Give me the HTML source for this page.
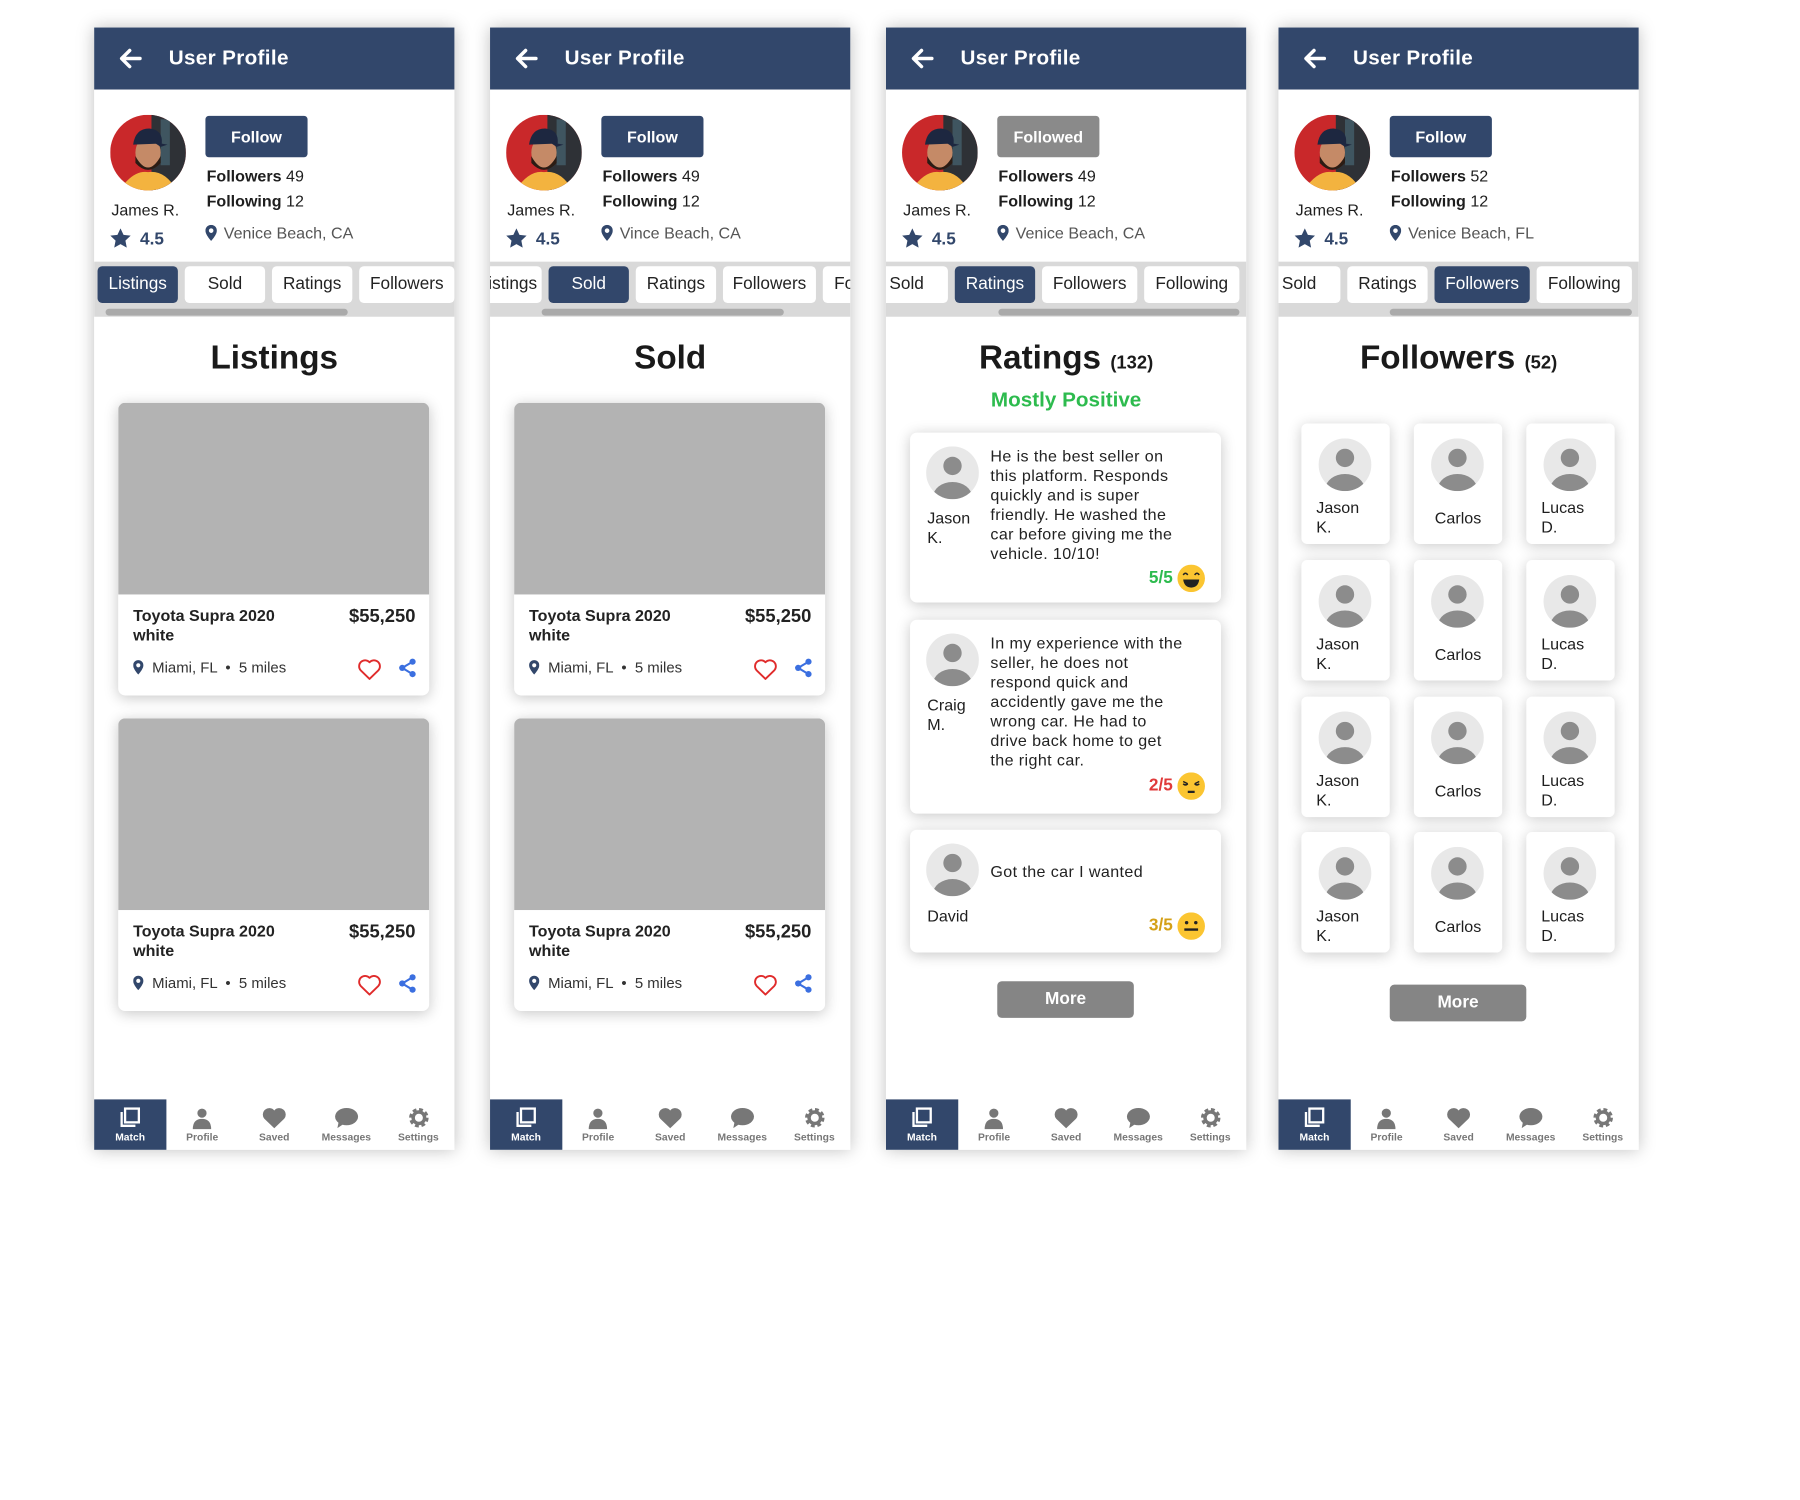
<!DOCTYPE html>
<html><head><meta charset="utf-8">
<style>
*{box-sizing:border-box;margin:0;padding:0}
html,body{width:1800px;height:1500px;background:#fff;overflow:hidden;font-family:"Liberation Sans",Arial,sans-serif;color:#1e1e1e}
#wrap{position:absolute;left:0;top:0;width:1560px;height:1300px;transform:scale(1.1476);transform-origin:0 0}
.panel{position:absolute;top:24px;width:314px;height:978px;background:#fff;box-shadow:0 0 14px rgba(0,0,0,.25);overflow:hidden}
.hdr{position:absolute;left:0;top:0;width:314px;height:54px;background:#32476b;color:#fff}
.hdr .t{position:absolute;left:65px;top:16px;font-size:18px;font-weight:bold;letter-spacing:.3px}
.hdr svg{position:absolute;left:22px;top:18px}
.av{position:absolute;left:14px;top:76px;width:66px;height:66px;border-radius:50%;overflow:hidden}
.name{position:absolute;left:15px;top:151px;font-size:14px}
.rate{position:absolute;left:14px;top:175px;font-size:15px;font-weight:bold;color:#32476b}
.rate svg{vertical-align:-3px;margin-right:8px}
.fbtn{position:absolute;left:97px;top:77px;width:89px;height:36px;border-radius:3px;background:#32476b;color:#fff;font-weight:bold;font-size:14px;text-align:center;line-height:36px}
.fl{position:absolute;left:98px;font-size:14px}
.fl b{font-weight:bold}
.loc{position:absolute;left:97px;top:171px;font-size:14px;color:#555}
.loc svg{vertical-align:-2px;margin-right:6px}
.tabbar{position:absolute;left:0;top:204px;width:314px;height:48px;background:#d9d9d9;overflow:hidden}
.tabs{position:absolute;top:4px;display:flex;gap:6px}
.tab{height:32px;background:#fff;border-radius:4px;font-size:15px;line-height:32px;text-align:center;color:#222;flex:none}
.tab.on{background:#32476b;color:#fff}
.sb{position:absolute;top:41px;height:6px;background:#aaa;border-radius:3px}
.title{position:absolute;left:0;width:314px;top:272px;text-align:center;font-size:29px;font-weight:bold;color:#1a1a1a}
.title small{font-size:16px}
.card{position:absolute;left:21px;width:271px;background:#fff;border-radius:6px;box-shadow:0 2px 12px rgba(0,0,0,.22);overflow:hidden}
.lc{height:255px}
.lc .img{height:167px;background:#b3b3b3}
.lc .nm{position:absolute;left:13px;top:177px;font-size:14px;font-weight:bold;line-height:17px;width:150px;color:#222}
.lc .pr{position:absolute;right:12px;top:178px;font-size:16px;font-weight:bold;color:#222}
.lc .lo{position:absolute;left:13px;top:223px;font-size:13px;color:#333}
.lc .lo svg{vertical-align:-2px;margin-right:4px}
.lc .ic{position:absolute;top:222px}
.rv .ua{position:absolute;left:14px;top:12px}
.rv .un{position:absolute;left:15px;font-size:14px;line-height:17px}
.rv .tx{position:absolute;left:70px;top:12px;font-size:14px;line-height:17px;color:#222;letter-spacing:.35px;white-space:nowrap}
.rv .sc{position:absolute;right:42px;font-size:15px;font-weight:bold}
.rv .em{position:absolute;right:14px}
.more{position:absolute;left:97px;width:119px;height:32px;border-radius:4px;background:#858585;color:#fff;font-weight:bold;font-size:15px;text-align:center;line-height:32px}
.gc{position:absolute;width:77px;height:105px;background:#fff;border-radius:5px;box-shadow:0 2px 12px rgba(0,0,0,.2)}
.gc svg{position:absolute;left:15px;top:13px}
.gc .n{position:absolute;left:13px;top:65px;font-size:14px;line-height:17px}
.gc .n.c{left:0;width:77px;text-align:center;top:74px}
.nav{position:absolute;left:0;top:934px;width:314px;height:44px;display:flex}
.nav div{flex:1;text-align:center;font-size:9px;font-weight:bold;color:#777;position:relative}
.nav div svg{display:block;margin:6px auto 2px}
.nav div.on{background:#32476b;color:#fff}
</style></head><body><div id="wrap">

<svg width="0" height="0" style="position:absolute">
<defs>
<symbol id="user" viewBox="0 0 46 46"><circle cx="23" cy="23" r="23" fill="#e8e8e8"/><clipPath id="cc"><circle cx="23" cy="23" r="23"/></clipPath><circle cx="23" cy="17" r="8" fill="#8c8c8c"/><ellipse cx="23" cy="44" rx="17" ry="13" fill="#8c8c8c" clip-path="url(#cc)"/></symbol>
<symbol id="photo" viewBox="0 0 66 66"><rect width="66" height="66" fill="#c9282a"/><rect x="36" width="30" height="66" fill="#2e3136"/><rect x="44" y="4" width="8" height="40" fill="#3f5560"/><path d="M8 66 Q20 48 33 50 Q48 48 58 66Z" fill="#f3b33f"/><ellipse cx="33" cy="33" rx="11" ry="14" fill="#c58a67"/><path d="M22 36 Q33 56 44 36 L44 42 Q33 54 22 42Z" fill="#2b1c14"/><path d="M20 26 Q22 12 34 12 Q46 13 45 25 L20 26Z" fill="#1d2740"/><path d="M38 24 L50 26 L44 28Z" fill="#1d2740"/></symbol>
<symbol id="pin" viewBox="0 0 10 14"><path d="M5 0C2.2 0 0 2.2 0 5c0 3.6 5 9 5 9s5-5.4 5-9C10 2.2 7.8 0 5 0zm0 7a2 2 0 110-4 2 2 0 010 4z" fill="#32476b"/></symbol>
<symbol id="heart" viewBox="0 0 24 22"><path d="M12 20.5 L3.5 12.2 A5.3 5.3 0 0 1 12 4.5 A5.3 5.3 0 0 1 20.5 12.2Z" fill="none" stroke="#e02b2b" stroke-width="1.8" stroke-linejoin="round"/></symbol>
<symbol id="share" viewBox="0 0 20 20"><path d="M15 4 L5 10 L15 16" stroke="#3b6fe0" stroke-width="2" fill="none"/><circle cx="15" cy="4" r="3" fill="#3b6fe0"/><circle cx="5" cy="10" r="3" fill="#3b6fe0"/><circle cx="15" cy="16" r="3" fill="#3b6fe0"/></symbol>
</defs></svg>

<!-- Panel 1 -->
<div class="panel" style="left:82px">
 <div class="hdr"><svg width="20" height="18" viewBox="0 0 20 18"><path d="M18 9H3M9 2L2 9l7 7" stroke="#fff" stroke-width="3" fill="none" stroke-linecap="round" stroke-linejoin="round"/></svg><div class="t">User Profile</div></div>
 <div class="av"><svg width="66" height="66"><use href="#photo"/></svg></div>
 <div class="name">James R.</div>
 <div class="rate"><svg width="18" height="17" viewBox="0 0 24 23"><path d="M12 0l3.6 7.6 8.4 1-6.2 5.8 1.6 8.3L12 18.6 4.6 22.7l1.6-8.3L0 8.6l8.4-1z" fill="#32476b"/></svg>4.5</div>
 <div class="fbtn">Follow</div>
 <div class="fl" style="top:121px"><b>Followers</b> 49</div>
 <div class="fl" style="top:143px"><b>Following</b> 12</div>
 <div class="loc"><svg width="10" height="14"><use href="#pin"/></svg>Venice Beach, CA</div>
 <div class="tabbar"><div class="tabs" style="left:3px"><div class="tab on" style="width:70px">Listings</div><div class="tab" style="width:70px">Sold</div><div class="tab" style="width:70px">Ratings</div><div class="tab" style="width:83px">Followers</div><div class="tab" style="width:83px">Following</div></div><div class="sb" style="left:10px;width:211px"></div></div>
 <div class="title">Listings</div>
 <div class="card lc" style="top:327px"><div class="img"></div><div class="nm">Toyota Supra 2020 white</div><div class="pr">$55,250</div><div class="lo"><svg width="9" height="13"><use href="#pin"/></svg> Miami, FL &nbsp;•&nbsp; 5 miles</div><svg class="ic" style="left:208px" width="22" height="20"><use href="#heart"/></svg><svg class="ic" style="left:243px" width="18" height="18"><use href="#share"/></svg></div>
 <div class="card lc" style="top:602px"><div class="img"></div><div class="nm">Toyota Supra 2020 white</div><div class="pr">$55,250</div><div class="lo"><svg width="9" height="13"><use href="#pin"/></svg> Miami, FL &nbsp;•&nbsp; 5 miles</div><svg class="ic" style="left:208px" width="22" height="20"><use href="#heart"/></svg><svg class="ic" style="left:243px" width="18" height="18"><use href="#share"/></svg></div>
 <div class="nav">
  <div class="on"><svg width="20" height="20" viewBox="0 0 20 20"><rect x="6" y="2" width="12" height="12" fill="none" stroke="currentColor" stroke-width="2"/><path d="M3 5v12h12" fill="none" stroke="currentColor" stroke-width="2"/></svg>Match</div>
  <div><svg width="20" height="20" viewBox="0 0 20 20"><circle cx="10" cy="6" r="4" fill="#777"/><path d="M2 20Q2 11 10 11Q18 11 18 20Z" fill="#777"/></svg>Profile</div>
  <div><svg width="22" height="20" viewBox="0 0 24 22"><path d="M12 21L2.5 12A5.8 5.8 0 0 1 12 4A5.8 5.8 0 0 1 21.5 12Z" fill="#777"/></svg>Saved</div>
  <div><svg width="22" height="20" viewBox="0 0 22 20"><ellipse cx="11" cy="9" rx="10" ry="7.5" fill="#777"/><path d="M4 14L3 19L9 15Z" fill="#777"/></svg>Messages</div>
  <div><svg width="20" height="20" viewBox="0 0 20 20"><circle cx="10" cy="10" r="6.5" fill="none" stroke="#777" stroke-width="4" stroke-dasharray="3 2.1"/><circle cx="10" cy="10" r="5" fill="none" stroke="#777" stroke-width="3"/></svg>Settings</div>
 </div>
</div>

<!-- Panel 2 -->
<div class="panel" style="left:427px">
 <div class="hdr"><svg width="20" height="18" viewBox="0 0 20 18"><path d="M18 9H3M9 2L2 9l7 7" stroke="#fff" stroke-width="3" fill="none" stroke-linecap="round" stroke-linejoin="round"/></svg><div class="t">User Profile</div></div>
 <div class="av"><svg width="66" height="66"><use href="#photo"/></svg></div>
 <div class="name">James R.</div>
 <div class="rate"><svg width="18" height="17" viewBox="0 0 24 23"><path d="M12 0l3.6 7.6 8.4 1-6.2 5.8 1.6 8.3L12 18.6 4.6 22.7l1.6-8.3L0 8.6l8.4-1z" fill="#32476b"/></svg>4.5</div>
 <div class="fbtn">Follow</div>
 <div class="fl" style="top:121px"><b>Followers</b> 49</div>
 <div class="fl" style="top:143px"><b>Following</b> 12</div>
 <div class="loc"><svg width="10" height="14"><use href="#pin"/></svg>Vince Beach, CA</div>
 <div class="tabbar"><div class="tabs" style="left:-25px"><div class="tab" style="width:70px;text-align:right;padding-right:4px">Listings</div><div class="tab on" style="width:70px">Sold</div><div class="tab" style="width:70px">Ratings</div><div class="tab" style="width:81px">Followers</div><div class="tab" style="width:83px">Following</div></div><div class="sb" style="left:45px;width:211px"></div></div>
 <div class="title">Sold</div>
 <div class="card lc" style="top:327px"><div class="img"></div><div class="nm">Toyota Supra 2020 white</div><div class="pr">$55,250</div><div class="lo"><svg width="9" height="13"><use href="#pin"/></svg> Miami, FL &nbsp;•&nbsp; 5 miles</div><svg class="ic" style="left:208px" width="22" height="20"><use href="#heart"/></svg><svg class="ic" style="left:243px" width="18" height="18"><use href="#share"/></svg></div>
 <div class="card lc" style="top:602px"><div class="img"></div><div class="nm">Toyota Supra 2020 white</div><div class="pr">$55,250</div><div class="lo"><svg width="9" height="13"><use href="#pin"/></svg> Miami, FL &nbsp;•&nbsp; 5 miles</div><svg class="ic" style="left:208px" width="22" height="20"><use href="#heart"/></svg><svg class="ic" style="left:243px" width="18" height="18"><use href="#share"/></svg></div>
 <div class="nav">
  <div class="on"><svg width="20" height="20" viewBox="0 0 20 20"><rect x="6" y="2" width="12" height="12" fill="none" stroke="currentColor" stroke-width="2"/><path d="M3 5v12h12" fill="none" stroke="currentColor" stroke-width="2"/></svg>Match</div>
  <div><svg width="20" height="20" viewBox="0 0 20 20"><circle cx="10" cy="6" r="4" fill="#777"/><path d="M2 20Q2 11 10 11Q18 11 18 20Z" fill="#777"/></svg>Profile</div>
  <div><svg width="22" height="20" viewBox="0 0 24 22"><path d="M12 21L2.5 12A5.8 5.8 0 0 1 12 4A5.8 5.8 0 0 1 21.5 12Z" fill="#777"/></svg>Saved</div>
  <div><svg width="22" height="20" viewBox="0 0 22 20"><ellipse cx="11" cy="9" rx="10" ry="7.5" fill="#777"/><path d="M4 14L3 19L9 15Z" fill="#777"/></svg>Messages</div>
  <div><svg width="20" height="20" viewBox="0 0 20 20"><circle cx="10" cy="10" r="6.5" fill="none" stroke="#777" stroke-width="4" stroke-dasharray="3 2.1"/><circle cx="10" cy="10" r="5" fill="none" stroke="#777" stroke-width="3"/></svg>Settings</div>
 </div>
</div>

<!-- Panel 3 -->
<div class="panel" style="left:772px">
 <div class="hdr"><svg width="20" height="18" viewBox="0 0 20 18"><path d="M18 9H3M9 2L2 9l7 7" stroke="#fff" stroke-width="3" fill="none" stroke-linecap="round" stroke-linejoin="round"/></svg><div class="t">User Profile</div></div>
 <div class="av"><svg width="66" height="66"><use href="#photo"/></svg></div>
 <div class="name">James R.</div>
 <div class="rate"><svg width="18" height="17" viewBox="0 0 24 23"><path d="M12 0l3.6 7.6 8.4 1-6.2 5.8 1.6 8.3L12 18.6 4.6 22.7l1.6-8.3L0 8.6l8.4-1z" fill="#32476b"/></svg>4.5</div>
 <div class="fbtn" style="background:#8a8a8a">Followed</div>
 <div class="fl" style="top:121px"><b>Followers</b> 49</div>
 <div class="fl" style="top:143px"><b>Following</b> 12</div>
 <div class="loc"><svg width="10" height="14"><use href="#pin"/></svg>Venice Beach, CA</div>
 <div class="tabbar"><div class="tabs" style="left:-16px"><div class="tab" style="width:70px;text-align:left;padding-left:19px">Sold</div><div class="tab on" style="width:70px">Ratings</div><div class="tab" style="width:83px">Followers</div><div class="tab" style="width:83px">Following</div></div><div class="sb" style="left:98px;width:210px"></div></div>
 <div class="title">Ratings <small>(132)</small></div>
 <div style="position:absolute;left:0;width:314px;top:314px;text-align:center;font-size:18px;font-weight:bold;color:#2dbb4e">Mostly Positive</div>
 <div class="card rv" style="top:353px;height:148px">
  <svg class="ua" width="46" height="46"><use href="#user"/></svg>
  <div class="un" style="top:66px">Jason<br>K.</div>
  <div class="tx">He is the best seller on<br>this platform. Responds<br>quickly and is super<br>friendly. He washed the<br>car before giving me the<br>vehicle. 10/10!</div>
  <div class="sc" style="top:118px;color:#2dbb4e">5/5</div>
  <svg class="em" style="top:115px" width="24" height="24" viewBox="0 0 24 24"><circle cx="12" cy="12" r="12" fill="#fbc531"/><path d="M5 9q2-3 4 0M15 9q2-3 4 0" stroke="#222" stroke-width="1.3" fill="none"/><path d="M5 13h14q-1 7-7 7t-7-7z" fill="#222"/></svg>
 </div>
 <div class="card rv" style="top:516px;height:169px">
  <svg class="ua" width="46" height="46"><use href="#user"/></svg>
  <div class="un" style="top:66px">Craig<br>M.</div>
  <div class="tx">In my experience with the<br>seller, he does not<br>respond quick and<br>accidently gave me the<br>wrong car. He had to<br>drive back home to get<br>the right car.</div>
  <div class="sc" style="top:136px;color:#e03a3a">2/5</div>
  <svg class="em" style="top:133px" width="24" height="24" viewBox="0 0 24 24"><circle cx="12" cy="12" r="12" fill="#fbc531"/><path d="M5 8l4 2M19 8l-4 2M5 10q2 2 4 0M15 10q2 2 4 0" stroke="#222" stroke-width="1.3" fill="none"/><path d="M9 17h6" stroke="#222" stroke-width="2"/></svg>
 </div>
 <div class="card rv" style="top:699px;height:107px">
  <svg class="ua" width="46" height="46"><use href="#user"/></svg>
  <div class="un" style="top:67px">David</div>
  <div class="tx" style="top:28px">Got the car I wanted</div>
  <div class="sc" style="top:75px;color:#d4a017">3/5</div>
  <svg class="em" style="top:72px" width="24" height="24" viewBox="0 0 24 24"><circle cx="12" cy="12" r="12" fill="#fbc531"/><circle cx="8" cy="9" r="1.5" fill="#222"/><circle cx="16" cy="9" r="1.5" fill="#222"/><path d="M6 15h12" stroke="#222" stroke-width="2"/></svg>
 </div>
 <div class="more" style="top:831px">More</div>
 <div class="nav">
  <div class="on"><svg width="20" height="20" viewBox="0 0 20 20"><rect x="6" y="2" width="12" height="12" fill="none" stroke="currentColor" stroke-width="2"/><path d="M3 5v12h12" fill="none" stroke="currentColor" stroke-width="2"/></svg>Match</div>
  <div><svg width="20" height="20" viewBox="0 0 20 20"><circle cx="10" cy="6" r="4" fill="#777"/><path d="M2 20Q2 11 10 11Q18 11 18 20Z" fill="#777"/></svg>Profile</div>
  <div><svg width="22" height="20" viewBox="0 0 24 22"><path d="M12 21L2.5 12A5.8 5.8 0 0 1 12 4A5.8 5.8 0 0 1 21.5 12Z" fill="#777"/></svg>Saved</div>
  <div><svg width="22" height="20" viewBox="0 0 22 20"><ellipse cx="11" cy="9" rx="10" ry="7.5" fill="#777"/><path d="M4 14L3 19L9 15Z" fill="#777"/></svg>Messages</div>
  <div><svg width="20" height="20" viewBox="0 0 20 20"><circle cx="10" cy="10" r="6.5" fill="none" stroke="#777" stroke-width="4" stroke-dasharray="3 2.1"/><circle cx="10" cy="10" r="5" fill="none" stroke="#777" stroke-width="3"/></svg>Settings</div>
 </div>
</div>

<!-- Panel 4 -->
<div class="panel" style="left:1114px">
 <div class="hdr"><svg width="20" height="18" viewBox="0 0 20 18"><path d="M18 9H3M9 2L2 9l7 7" stroke="#fff" stroke-width="3" fill="none" stroke-linecap="round" stroke-linejoin="round"/></svg><div class="t">User Profile</div></div>
 <div class="av"><svg width="66" height="66"><use href="#photo"/></svg></div>
 <div class="name">James R.</div>
 <div class="rate"><svg width="18" height="17" viewBox="0 0 24 23"><path d="M12 0l3.6 7.6 8.4 1-6.2 5.8 1.6 8.3L12 18.6 4.6 22.7l1.6-8.3L0 8.6l8.4-1z" fill="#32476b"/></svg>4.5</div>
 <div class="fbtn">Follow</div>
 <div class="fl" style="top:121px"><b>Followers</b> 52</div>
 <div class="fl" style="top:143px"><b>Following</b> 12</div>
 <div class="loc"><svg width="10" height="14"><use href="#pin"/></svg>Venice Beach, FL</div>
 <div class="tabbar"><div class="tabs" style="left:-16px"><div class="tab" style="width:70px;text-align:left;padding-left:19px">Sold</div><div class="tab" style="width:70px">Ratings</div><div class="tab on" style="width:83px">Followers</div><div class="tab" style="width:83px">Following</div></div><div class="sb" style="left:97px;width:211px"></div></div>
 <div class="title">Followers <small>(52)</small></div>
 <div class="gc" style="left:20px;top:345px"><svg width="46" height="46"><use href="#user"/></svg><div class="n">Jason<br>K.</div></div>
 <div class="gc" style="left:118px;top:345px"><svg width="46" height="46"><use href="#user"/></svg><div class="n c">Carlos</div></div>
 <div class="gc" style="left:216px;top:345px"><svg width="46" height="46"><use href="#user"/></svg><div class="n">Lucas<br>D.</div></div>
 <div class="gc" style="left:20px;top:464px"><svg width="46" height="46"><use href="#user"/></svg><div class="n">Jason<br>K.</div></div>
 <div class="gc" style="left:118px;top:464px"><svg width="46" height="46"><use href="#user"/></svg><div class="n c">Carlos</div></div>
 <div class="gc" style="left:216px;top:464px"><svg width="46" height="46"><use href="#user"/></svg><div class="n">Lucas<br>D.</div></div>
 <div class="gc" style="left:20px;top:583px"><svg width="46" height="46"><use href="#user"/></svg><div class="n">Jason<br>K.</div></div>
 <div class="gc" style="left:118px;top:583px"><svg width="46" height="46"><use href="#user"/></svg><div class="n c">Carlos</div></div>
 <div class="gc" style="left:216px;top:583px"><svg width="46" height="46"><use href="#user"/></svg><div class="n">Lucas<br>D.</div></div>
 <div class="gc" style="left:20px;top:701px"><svg width="46" height="46"><use href="#user"/></svg><div class="n">Jason<br>K.</div></div>
 <div class="gc" style="left:118px;top:701px"><svg width="46" height="46"><use href="#user"/></svg><div class="n c">Carlos</div></div>
 <div class="gc" style="left:216px;top:701px"><svg width="46" height="46"><use href="#user"/></svg><div class="n">Lucas<br>D.</div></div>
 <div class="more" style="top:834px">More</div>
 <div class="nav">
  <div class="on"><svg width="20" height="20" viewBox="0 0 20 20"><rect x="6" y="2" width="12" height="12" fill="none" stroke="currentColor" stroke-width="2"/><path d="M3 5v12h12" fill="none" stroke="currentColor" stroke-width="2"/></svg>Match</div>
  <div><svg width="20" height="20" viewBox="0 0 20 20"><circle cx="10" cy="6" r="4" fill="#777"/><path d="M2 20Q2 11 10 11Q18 11 18 20Z" fill="#777"/></svg>Profile</div>
  <div><svg width="22" height="20" viewBox="0 0 24 22"><path d="M12 21L2.5 12A5.8 5.8 0 0 1 12 4A5.8 5.8 0 0 1 21.5 12Z" fill="#777"/></svg>Saved</div>
  <div><svg width="22" height="20" viewBox="0 0 22 20"><ellipse cx="11" cy="9" rx="10" ry="7.5" fill="#777"/><path d="M4 14L3 19L9 15Z" fill="#777"/></svg>Messages</div>
  <div><svg width="20" height="20" viewBox="0 0 20 20"><circle cx="10" cy="10" r="6.5" fill="none" stroke="#777" stroke-width="4" stroke-dasharray="3 2.1"/><circle cx="10" cy="10" r="5" fill="none" stroke="#777" stroke-width="3"/></svg>Settings</div>
 </div>
</div>

</div></body></html>
